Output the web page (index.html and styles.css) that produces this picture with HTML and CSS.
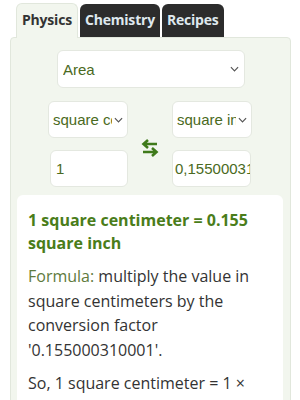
FILE: index.html
```html
<!DOCTYPE html>
<html>
<head>
<meta charset="utf-8">
<link rel="stylesheet" href="styles.css">
</head>
<body>
<div class="tabs">
  <div class="tab active">Physics</div>
  <div class="tab">Chemistry</div>
  <div class="tab">Recipes</div>
</div>
<div class="panel">
  <div class="row-top">
    <div class="select big"><span>Area</span><svg class="chev" viewBox="0 0 10 6"><path d="M1 1l4 4 4-4" fill="none" stroke="#555" stroke-width="1.3"/></svg></div>
  </div>
  <div class="conv">
    <div class="col left">
      <div class="select small"><span>square centimeter</span><svg class="chev" viewBox="0 0 10 6"><path d="M1 1l4 4 4-4" fill="none" stroke="#555" stroke-width="1.3"/></svg></div>
      <div class="input"><span>1</span></div>
    </div>
    <div class="swap">
      <svg viewBox="0 0 20 20" width="20" height="20"><path d="M17 6H4M8 2L3.5 6 8 10" fill="none" stroke="#3f7a1a" stroke-width="2.6"/><path d="M3 14h13M12 10l4.5 4-4.5 4" fill="none" stroke="#3f7a1a" stroke-width="2.6"/></svg>
    </div>
    <div class="col right">
      <div class="select small"><span>square inch</span><svg class="chev" viewBox="0 0 10 6"><path d="M1 1l4 4 4-4" fill="none" stroke="#555" stroke-width="1.3"/></svg></div>
      <div class="input r"><span>0,155000310001</span></div>
    </div>
  </div>
  <div class="card">
    <div class="title">1 square centimeter = 0.155 square inch</div>
    <p><span class="lbl">Formula:</span> multiply the value in square centimeters by the conversion factor '0.155000310001'.</p>
    <p>So, 1 square centimeter = 1 × 0.155000310001 = 0.155 square inch.</p>
  </div>
</div>
</body>
</html>
```
FILE: styles.css
```css
html, body { margin: 0; padding: 0; background: #fff; }
body { font-family: "Open Sans", sans-serif; overflow: hidden; height: 400px; }
.tabs { display: flex; gap: 2px; padding: 3px 0 0 16px; height: 37px; box-sizing: border-box; }
.tab {
  font-family: "Open Sans", sans-serif; font-weight: 700; font-size: 14px;
  background: #2c2c2c; color: #dfe8ee; padding: 6px 5px 0 5px;
  border-radius: 6px 6px 0 0; height: 33px; box-sizing: border-box; margin-top: 1px;
  letter-spacing: -0.2px;
}
.tab.active { background: #f2f6ee; color: #333; border: 1px solid #e1e7dc; border-bottom: none; margin-top: 0; height: 35px; padding-top: 6px; position: relative; z-index: 1; }
.panel {
  margin: 0 9px 0 10px; background: #f2f6ee; border: 1px solid #e1e7dc; border-radius: 4px;
  height: 400px; box-sizing: border-box; padding-top: 12px;
}
.row-top { display: flex; justify-content: flex-start; padding-left: 46px; }
.select {
  background: #fff; border: 1px solid #e4e8e0; border-radius: 6px; box-sizing: border-box;
  display: flex; align-items: center; font-family: "Liberation Sans", Arial, sans-serif;
  color: #4a6a22; font-size: 15px; overflow: hidden;
}
.select span { flex: 1; white-space: nowrap; overflow: hidden; }
.select.big { width: 188px; height: 38px; padding: 0 5px 0 5px; }
.select.small { width: 80px; height: 37px; padding: 0 4px 0 4px; }
.chev { width: 9px; height: 6px; flex: none; margin-left: 2px; }
.conv { display: flex; justify-content: flex-start; align-items: center; gap: 12px; margin-top: 13px; padding-left: 37px; }
.col { display: flex; flex-direction: column; gap: 12px; width: 80px; }
.col.left { align-items: flex-end; }
.col.right { align-items: flex-start; }
.input {
  width: 78px; height: 37px; background: #fff; border: 1px solid #e4e8e0; border-radius: 6px;
  box-sizing: border-box; display: flex; align-items: center; padding: 0 5px;
  font-family: "Liberation Sans", Arial, sans-serif; color: #4a6a22; font-size: 15px; overflow: hidden; white-space: nowrap;
}
.input.r { width: 79px; padding: 0 2px; }
.swap { display: flex; align-items: center; justify-content: center; width: 20px; margin-top: 8px; }
.card {
  margin: 8px 7px 0 6px; background: #fff; border-radius: 6px; padding: 14px 11px;
  font-size: 16px; line-height: 24.5px; color: #333; height: 300px; box-sizing: border-box;
}
.title { color: #4a7d1a; font-weight: 700; line-height: 23px; }
.card p { margin: 9px 0 0; }
.lbl { color: #5e7a3c; }
```
